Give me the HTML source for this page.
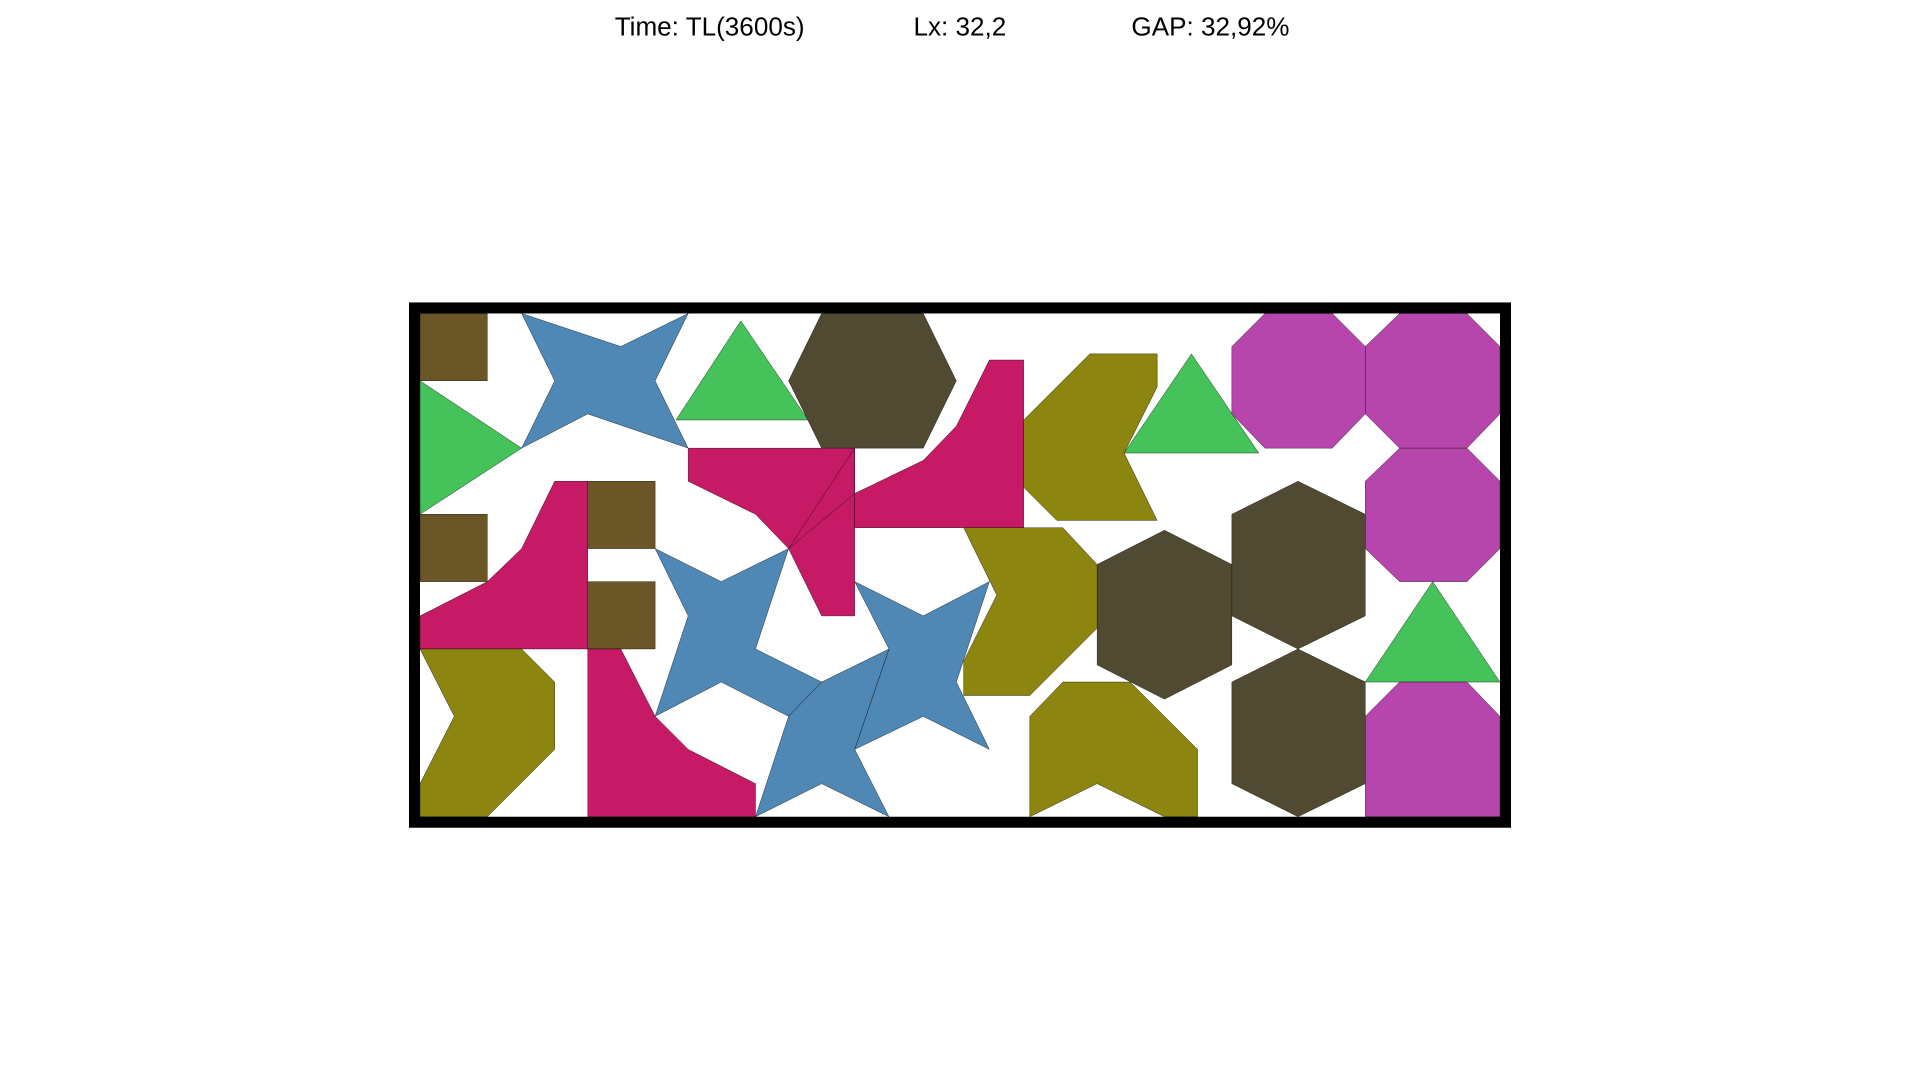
<!DOCTYPE html>
<html><head><meta charset="utf-8"><style>
html,body{margin:0;padding:0;background:#fff;width:1920px;height:1080px;overflow:hidden}
svg{display:block}
</style></head><body>
<svg width="1920" height="1080" viewBox="0 0 1568 882" preserveAspectRatio="none" xmlns="http://www.w3.org/2000/svg">
<g font-family="Liberation Sans, sans-serif" font-size="21.3" fill="#000">
<text x="502" y="29">Time: TL(3600s)</text>
<text x="746" y="29">Lx: 32,2</text>
<text x="924" y="29">GAP: 32,92%</text>
</g>
<g stroke="#000" stroke-width="0.3">
<g fill="#6b5628">
<rect x="343" y="256" width="55" height="55"/>
<rect x="343" y="420" width="55" height="55"/>
<rect x="480" y="393" width="55" height="55"/>
<rect x="480" y="475" width="55" height="55"/>
</g>
<g fill="#5088b5">
<polygon points="426,256 507,283 562,256 535,311 562,366 480,338 426,366 453,311"/>
<polygon points="535,448 589,475 644,448 617,530 671,557 644,585 589,557 535,585 562,503"/>
<polygon points="698,475 754,503 808,475 781,557 808,612 754,585 698,612 726,530"/>
<polygon points="644,585 671,557 726,530 698,612 726,667 671,640 617,667"/>
</g>
<g fill="#45c35a">
<polygon points="343,311 426,366 343,420"/>
<polygon points="605,262 552,343 660,343"/>
<polygon points="973,289 918,370 1028,370"/>
<polygon points="1170,475 1115,557 1225,557"/>
</g>
<g fill="#504a32">
<polygon points="671,256 754,256 781,311 754,366 671,366 644,311"/>
<polygon points="1060,393 1115,420 1115,503 1060,530 1006,503 1006,420"/>
<polygon points="951,433 1006,461 1006,543 951,571 896,543 896,461"/>
<polygon points="1060,530 1115,557 1115,640 1060,667 1006,640 1006,557"/>
</g>
<g fill="#c61a66">
<polygon points="562,366 698,366 698,503 671,503 644,448 617,420 562,393"/>
<polygon points="698,403 754,376 781,348 808,294 836,294 836,431 698,431"/>
<polygon points="698,366 698,403 644,448"/>
<polygon points="343,503 398,475 426,448 453,393 480,393 480,530 343,530"/>
<polygon points="480,530 507,530 535,585 562,612 617,640 617,667 480,667"/>
</g>
<g fill="#8c8510">
<polygon points="836,343 890,289 945,289 945,316 918,370 945,425 863,425 836,398"/>
<polygon points="787,431 868,431 896,461 896,513 841,568 787,568 787,540 814,486"/>
<polygon points="841,585 868,557 923,557 978,612 978,667 951,667 896,640 841,667"/>
<polygon points="343,530 426,530 453,557 453,612 398,667 343,667 343,640 371,585"/>
</g>
<g fill="#b646ab">
<polygon points="1033,256 1088,256 1115,283 1115,338 1088,366 1033,366 1006,338 1006,283"/>
<polygon points="1143,256 1198,256 1225,283 1225,338 1198,366 1143,366 1115,338 1115,283"/>
<polygon points="1143,366 1198,366 1225,393 1225,448 1198,475 1143,475 1115,448 1115,393"/>
<polygon points="1143,557 1198,557 1225,585 1225,667 1115,667 1115,585"/>
</g>
</g>
<rect x="338.5" y="251.5" width="891" height="420" fill="none" stroke="#000" stroke-width="9"/>
</svg>
</body></html>
